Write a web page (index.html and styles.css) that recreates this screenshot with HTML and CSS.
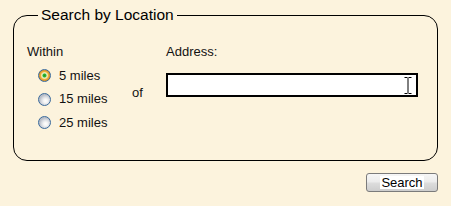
FILE: index.html
```html
<!DOCTYPE html>
<html>
<head>
<meta charset="utf-8">
<link rel="stylesheet" href="styles.css">
</head>
<body>
<fieldset class="box">
  <legend class="box-title">Search by Location</legend>
  <div class="box-body">
    <div class="col-within">
      <div class="label">Within</div>
      <div class="radios">
        <label class="radio-row"><input type="radio" name="dist" class="radio" checked><span>5 miles</span></label>
        <label class="radio-row"><input type="radio" name="dist" class="radio"><span>15 miles</span></label>
        <label class="radio-row"><input type="radio" name="dist" class="radio"><span>25 miles</span></label>
      </div>
    </div>
    <div class="col-of">of</div>
    <div class="col-address">
      <div class="label">Address:</div>
      <div class="input-wrap">
        <input type="text" class="address-input">
        <svg class="ibeam" width="8" height="17" viewBox="0 0 8 17">
          <path d="M0.5 0.5H3.5M4.5 0.5H7.5M4 1V16M0.5 16.5H3.5M4.5 16.5H7.5" stroke="#000" stroke-width="1" fill="none"/>
        </svg>
      </div>
    </div>
  </div>
</fieldset>
<div class="actions">
  <button class="search-btn"><span class="search-text">Search</span></button>
</div>
</body>
</html>
```

FILE: styles.css
```css
html, body {
  margin: 0;
  padding: 0;
  background: #fcf3dd;
  font-family: "Liberation Sans", Arial, sans-serif;
  color: #111;
}

.box {
  margin: 6px 13px 0 13px;
  padding: 0;
  border: 1px solid #000;
  border-radius: 14px;
  min-width: 0;
}

.box-title {
  margin-left: 24px;
  padding: 0 3px;
  font-size: 15.5px;
  line-height: 18px;
  color: #000;
}

.box-body {
  display: flex;
  padding: 20px 0 25.5px 13px;
  font-size: 13px;
  line-height: 16px;
}

.label {
  height: 16px;
}

.col-within {
  width: 105px;
}

.radios {
  margin-top: 4px;
  padding-left: 11px;
}

.radio-row {
  display: flex;
  align-items: center;
  height: 23.5px;
  gap: 8px;
}

.radio {
  appearance: none;
  -webkit-appearance: none;
  margin: 0;
  width: 13px;
  height: 13px;
  border-radius: 50%;
  border: 1px solid #3a6a9c;
  background: radial-gradient(circle at 60% 62%, #ffffff 0, #f4f4f4 2px, #d9dce2 4px, #b9bec8 6px);
  box-sizing: border-box;
}

.radio:checked {
  background: radial-gradient(circle, #1f9a1f 0, #34b534 1.6px, #d8f0c8 2.4px, #f8e4a0 3px, #eab040 4px, #d99020 5.5px);
}

.col-of {
  width: 34px;
  padding-top: 40.5px;
}

.input-wrap {
  position: relative;
  margin-top: 13px;
  width: 252px;
  height: 24px;
}

.address-input {
  box-sizing: border-box;
  width: 252px;
  height: 24px;
  margin: 0;
  border: 2px solid #000;
  background: #fff;
  padding: 0 4px;
  outline: none;
}

.ibeam {
  position: absolute;
  left: 238px;
  top: 4px;
}

.actions {
  display: flex;
  justify-content: flex-end;
  padding: 12px 13px 0 0;
}

.search-btn {
  box-sizing: border-box;
  width: 72px;
  height: 19px;
  margin: 0;
  padding: 0;
  border: 1px solid #7b7b7b;
  border-radius: 3px;
  background: linear-gradient(#f6f6f6 0%, #ececec 45%, #dcdcdc 55%, #cdcdcd 100%);
  font-family: "Liberation Sans", Arial, sans-serif;
  font-size: 13px;
  color: #000;
  display: flex;
  align-items: center;
  justify-content: center;
}

.search-text {
  background: #fff;
  line-height: 13px;
  padding: 0 1px;
}
```
